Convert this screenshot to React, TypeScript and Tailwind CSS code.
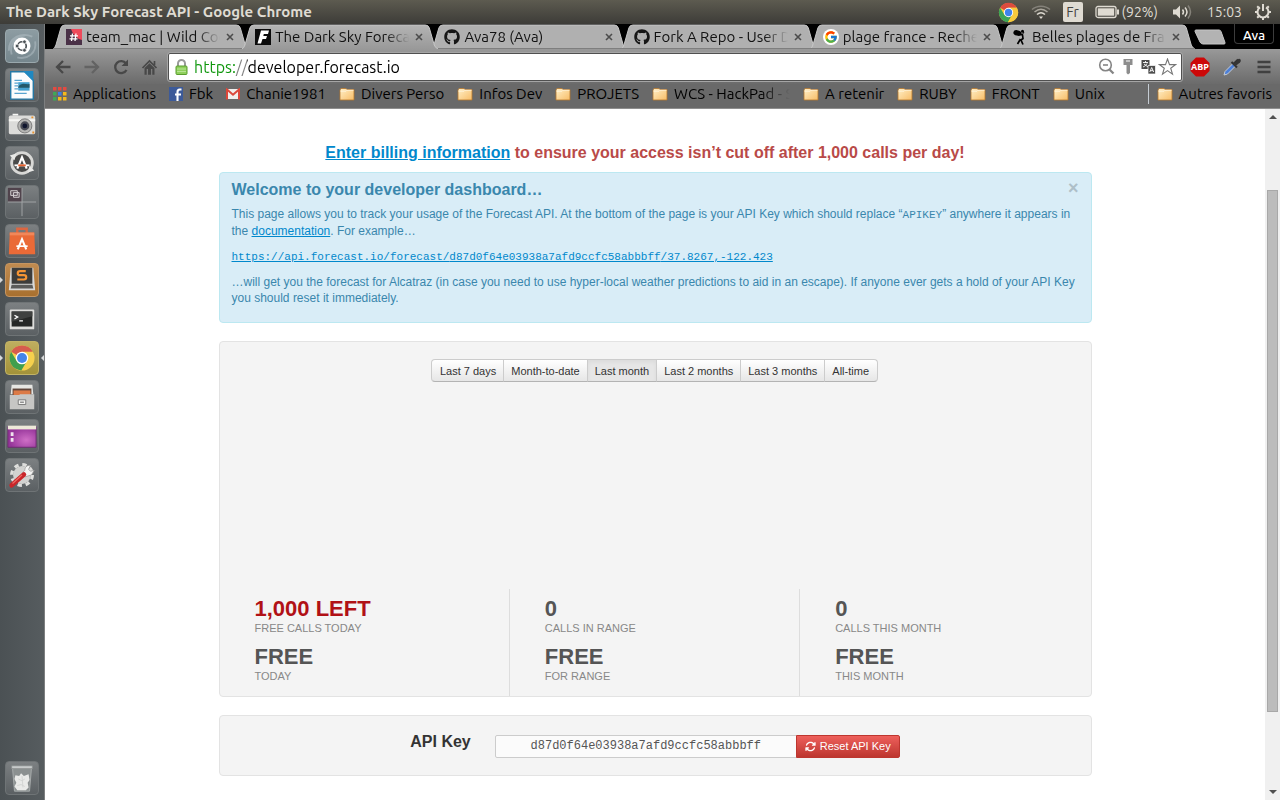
import type { ReactNode } from 'react';
import { FaGithub } from 'react-icons/fa';
import { FaArrowsRotate } from 'react-icons/fa6';
import { FcGoogle } from 'react-icons/fc';

const API_KEY = 'd87d0f64e03938a7afd9ccfc58abbbff';

/* ---------- shared drawings ---------- */

function ChromeLogo({ size }: { size: number }) {
  return (
    <svg width={size} height={size} viewBox="0 0 24 24" aria-hidden="true">
      <circle cx="12" cy="12" r="11" fill="#f6c93d" />
      <path d="M12 12 2.47 6.5A11 11 0 0 1 21.53 6.5H12Z" fill="#dd4b3e" />
      <path d="M2.47 6.5A11 11 0 0 0 11.4 23L16.3 14.6 7.6 15.2Z" fill="#3da557" />
      <path d="M21.53 6.5A11 11 0 0 1 11.4 23L16.5 14.4 12 6.5Z" fill="#f6c93d" />
      <circle cx="12" cy="12" r="5.3" fill="#fff" />
      <circle cx="12" cy="12" r="4.2" fill="#3f83ec" />
    </svg>
  );
}

function Folder() {
  return (
    <svg width="16" height="14" viewBox="0 0 16 14" aria-hidden="true" className="shrink-0">
      <defs>
        <linearGradient id="folder" x1="0" y1="0" x2="1" y2="1">
          <stop offset="0" stopColor="#fff0c9" />
          <stop offset="1" stopColor="#f8bd67" />
        </linearGradient>
      </defs>
      <path d="M1 3 2 1.500h5l1 1h7V13H1Z" fill="url(#folder)" stroke="#b5762c" strokeWidth="0.8" />
      <path d="M1.500 4.200h5.500l1-1h6.500" fill="none" stroke="#fff8e5" strokeWidth="0.8" />
    </svg>
  );
}

/* ---------- desktop top bar ---------- */

function MenuBar() {
  return (
    <header className="flex h-6 shrink-0 items-center justify-between bg-linear-to-b from-[#5d5b50] to-[#3d3c38] pr-2 pl-1.5 text-[#dfdbd2]">
      <h1 className="text-[15px] leading-6 font-bold">The Dark Sky Forecast API - Google Chrome</h1>
      <div className="flex items-center text-sm leading-6">
        <ChromeLogo size={21} />
        <svg width="20" height="16" viewBox="0 0 20 16" aria-hidden="true" className="ml-3" fill="none" strokeWidth="1.5">
          <path d="M1 5.500C6 1 14 1 19 5.500" stroke="#85827a" />
          <path d="M3.500 8C7.500 4.500 12.500 4.500 16.500 8" stroke="#aaa69d" />
          <path d="M6 10.500C8.500 8.300 11.500 8.300 14 10.500" stroke="#dfdbd2" />
          <path d="M8 12.500h4L10 15Z" fill="#dfdbd2" stroke="none" />
        </svg>
        <span className="ml-3 flex h-5 w-5 items-center justify-center rounded-xs bg-[#dfdbd2] text-sm text-[#45443f]">Fr</span>
        <svg width="25" height="14" viewBox="0 0 25 14" aria-hidden="true" className="ml-3">
          <rect x="1" y="1.500" width="20" height="11" rx="2" fill="none" stroke="#dfdbd2" strokeWidth="1.300" />
          <rect x="2.800" y="3.300" width="16.400" height="7.400" fill="#dfdbd2" />
          <path d="M22 4.500h2v5h-2z" fill="#dfdbd2" />
        </svg>
        <span className="ml-0.5">(92%)</span>
        <svg width="21" height="16" viewBox="0 0 21 16" aria-hidden="true" className="ml-3.5" fill="none" strokeWidth="1.500">
          <path d="M1 5.500h3l4-4v13l-4-4H1Z" fill="#dfdbd2" />
          <path d="M10.500 5.500q2 2.500 0 5M13 3.500q4 4.500 0 9" stroke="#dfdbd2" />
          <path d="M16 1.500q5 6.500 0 13" stroke="#85827a" />
        </svg>
        <time className="ml-3.5">15:03</time>
        <svg width="18" height="18" viewBox="0 0 18 18" aria-hidden="true" className="ml-3" fill="none" stroke="#dfdbd2">
          <path d="M6 4.300A5.500 5.500 0 1 0 12 4.300" strokeWidth="2" />
          <path d="M9 1v7" strokeWidth="2" />
          <path d="M1 9h2M15 9h2M9 15v2M3.200 3.200l1.500 1.500M14.800 3.200l-1.500 1.500M3.200 14.800l1.500-1.500M14.800 14.800l-1.500-1.500" strokeWidth="2" />
        </svg>
      </div>
    </header>
  );
}

/* ---------- launcher ---------- */

type LauncherItem = { name: string; tone: string; art: ReactNode; running?: boolean; focused?: boolean };

const GREY = 'border-[#6f7476] bg-linear-to-b from-[#7c8082] to-[#5b6063]';

const launcher: LauncherItem[] = [
  {
    name: 'Dash',
    tone: 'border-[#9aa8ad] bg-linear-to-b from-[#8d9ca2] to-[#75868d]',
    art: (
      <>
        <path d="M3 22C3 8 16 2 28 7M31 12c2 12-8 20-19 17M6 26C3 15 11 6 20 6" fill="none" stroke="#b5c2c7" strokeWidth="2" opacity=".5" />
        <circle cx="17" cy="17" r="9" fill="#fff" />
        <circle cx="17" cy="17" r="4.500" fill="none" stroke="#4a5054" strokeWidth="1.800" />
        <g fill="#4a5054" stroke="#fff" strokeWidth=".8">
          <circle cx="11.800" cy="17" r="2" />
          <circle cx="19.600" cy="12.500" r="2" />
          <circle cx="19.600" cy="21.500" r="2" />
        </g>
      </>
    ),
  },
  {
    name: 'LibreOffice Writer',
    tone: GREY,
    art: (
      <>
        <path d="M5 3h15l9 9v20H5Z" fill="#fafcfd" stroke="#2478a5" strokeWidth="1.500" />
        <path d="M18 2h11v11Z" fill="#1f88c1" />
        <path d="M9 12h8M9 15h4M9 18h4M9 21h4M9 26h13" stroke="#58a3cf" strokeWidth="1.300" />
        <path d="M13 14h12v9H13z" fill="#45a2d0" />
        <path d="M13 19c4-6 8-2 12-3v4H13Z" fill="#24596a" />
      </>
    ),
  },
  {
    name: 'Camera',
    tone: GREY,
    art: (
      <>
        <rect x="3" y="8" width="28" height="20" rx="2" fill="#dcdcda" />
        <path d="M7 6h6v2H7zM3 12h28v2H3z" fill="#f6f6f4" />
        <circle cx="20" cy="19" r="7.500" fill="#b5b5b3" stroke="#777" />
        <circle cx="20" cy="19" r="4.800" fill="#4a4c55" />
        <circle cx="20" cy="19" r="2.500" fill="#10152e" />
        <path d="M27 9h2v2h-2zM28 25h2v2h-2z" fill="#e8912d" />
      </>
    ),
  },
  {
    name: 'Software Updater',
    tone: GREY,
    art: (
      <>
        <circle cx="17" cy="17" r="11" fill="#4a4a49" stroke="#d8d8d6" strokeWidth="3" />
        <path d="M4 9l7-2-2 7ZM30 25l-7 2 2-7Z" fill="#e8e8e6" />
        <path d="M12 23l5-12 5 12" fill="none" stroke="#fff" strokeWidth="2.300" />
        <path d="M9 19.500h16" stroke="#fff" strokeWidth="2" />
        <path d="M13 19.500h8" stroke="#e6602d" strokeWidth="2" />
      </>
    ),
  },
  {
    name: 'Workspace Switcher',
    tone: GREY,
    art: (
      <>
        <path d="M2 2h15v15H2z" fill="#50434c" />
        <path d="M17 2v30M2 17h30" stroke="#a3a6a8" />
        <path d="M5 5h7v5H5zM8 7h6v5H8z" fill="#5f525b" stroke="#d5d0d3" />
      </>
    ),
  },
  {
    name: 'Software Centre',
    tone: GREY,
    art: (
      <>
        <path d="M12 9V4h10v5" fill="none" stroke="#dc6641" strokeWidth="2.500" />
        <path d="M4 8h26l1 23H3Z" fill="#ea6a37" />
        <path d="M4 8h26v3H4Z" fill="#f28759" />
        <path d="M12.500 26l4.500-11 4.500 11" fill="none" stroke="#fff" strokeWidth="2.200" />
        <path d="M11 22.500h12" stroke="#fff" strokeWidth="1.800" />
      </>
    ),
  },
  {
    name: 'Sublime Text',
    tone: 'border-[#c59561] bg-linear-to-b from-[#c08b50] to-[#a8702f]',
    running: true,
    art: (
      <>
        <path d="M5 4h24l2 24H3Z" fill="#d9d9d8" />
        <path d="M6 4h22v17H6z" fill="#3c3c3b" />
        <path d="M6 22h22l1 4H5Z" fill="#5b5b5a" />
        <path d="M21 7.500h-6q-2.500 0-2.500 2.200t2.500 2.200h4q2.500 0 2.500 2.300t-2.500 2.300h-7" fill="none" stroke="#f59434" strokeWidth="2.300" />
      </>
    ),
  },
  {
    name: 'Terminal',
    tone: GREY,
    art: (
      <>
        <rect x="4" y="7" width="26" height="21" rx="1" fill="#dddddb" />
        <path d="M6 9h22v16H6z" fill="#262827" />
        <path d="M6 9h22v5L6 20Z" fill="#3f4140" />
        <path d="M9 13l3.500 2-3.500 2M14 19h4" fill="none" stroke="#fff" strokeWidth="1.300" />
      </>
    ),
  },
  {
    name: 'Google Chrome',
    tone: 'border-[#c2b366] bg-linear-to-b from-[#bfae5f] to-[#a39239]',
    running: true,
    focused: true,
    art: (
      <g transform="translate(2.500 2.500) scale(1.210)">
        <circle cx="12" cy="12" r="11" fill="#f6d04d" />
        <path d="M12 12 2.470 6.500A11 11 0 0 1 21.530 6.500H12Z" fill="#d65c4e" />
        <path d="M2.470 6.500A11 11 0 0 0 11.400 23L16.300 14.600 7.600 15.200Z" fill="#409f4e" />
        <circle cx="12" cy="12" r="5.500" fill="#fff" />
        <circle cx="12" cy="12" r="4.400" fill="#4585ea" />
      </g>
    ),
  },
  {
    name: 'Files',
    tone: GREY,
    art: (
      <>
        <path d="M6 4h22l1 10H5Z" fill="#e6e6e3" />
        <path d="M7 8h20v8H7z" fill="#60453a" />
        <path d="M8 10h18v5H8z" fill="#dc7a46" />
        <path d="M4 15h10l1-1h15v16H4Z" fill="#c6c6c4" />
        <path d="M13 20h8v5h-8z" fill="#f2f2f0" stroke="#777" />
        <path d="M15 22.500h4" stroke="#555" />
      </>
    ),
  },
  {
    name: 'Desktop',
    tone: GREY,
    art: (
      <>
        <defs>
          <radialGradient id="wallpaper" cx=".65" cy=".65" r=".6">
            <stop offset="0" stopColor="#cf6fc6" />
            <stop offset="1" stopColor="#96359a" />
          </radialGradient>
        </defs>
        <path d="M2 7h30v22H2z" fill="url(#wallpaper)" stroke="#6b2b6e" />
        <path d="M2 6h30v4H2z" fill="#eee9d9" />
        <path d="M5 13h3v4H5zM5 19h3v4H5z" fill="#efe2ee" />
      </>
    ),
  },
  {
    name: 'System Settings',
    tone: GREY,
    art: (
      <>
        <circle cx="17" cy="17" r="11" fill="none" stroke="#dededc" strokeWidth="3.500" strokeDasharray="4.600 4.040" />
        <circle cx="17" cy="17" r="9.500" fill="#d2d2d0" />
        <path d="M20 12l-3 3 3 4 7-2 3-5-4 1-2-2 2-4c-4-1-6 2-6 5Z" fill="#f4f4f3" stroke="#9a9a98" strokeWidth=".8" />
        <path d="M6 28 19 16.500" stroke="#c9262a" strokeWidth="5" strokeLinecap="round" />
        <path d="M7 26 17 17" stroke="#ee6b65" strokeWidth="1.200" />
      </>
    ),
  },
];

function LauncherTile({ name, tone, art, running, focused }: LauncherItem) {
  return (
    <li className="relative">
      <button type="button" aria-label={name} className={`block h-[34px] w-[34px] rounded-sm border ${tone}`}>
        <svg viewBox="0 0 34 34" aria-hidden="true" className="h-full w-full">
          {art}
        </svg>
      </button>
      {running && <span className="absolute top-3.5 -left-[5px] border-y-3 border-l-3 border-y-transparent border-l-[#d8dadb]" />}
      {focused && <span className="absolute top-3.5 -right-[5px] border-y-3 border-r-3 border-y-transparent border-r-[#d8dadb]" />}
    </li>
  );
}

function Launcher() {
  return (
    <nav aria-label="Launcher" className="flex w-[45px] shrink-0 flex-col justify-between border-r border-[#7d7f80] bg-linear-to-r from-[#4b5154] to-[#565c5f] p-[5px]">
      <ul className="flex flex-col gap-[5px]">
        {launcher.map((item) => (
          <LauncherTile key={item.name} {...item} />
        ))}
      </ul>
      <ul>
        <LauncherTile
          name="Trash"
          tone={GREY}
          art={
            <>
              <path d="M7 7h20l-2 24H9Z" fill="#8b9090" stroke="#a9adad" />
              <path d="M10 14l4 1 2-3 3 3 5-2 1 6-2 3 1 5-3 3H12l-3-4 2-4-2-4Z" fill="#e9eae8" />
              <path d="M13 18l4 2 3-2M12 25l4-1 4 2M17 15l1 12" fill="none" stroke="#d2d4d2" />
              <path d="M6 4h22v3H6z" fill="#c7caca" stroke="#888c8c" strokeWidth=".8" />
            </>
          }
        />
      </ul>
    </nav>
  );
}

/* ---------- browser tabs ---------- */

const tabs: { title: string; icon: ReactNode; active?: boolean }[] = [
  {
    title: 'team_mac | Wild Code School',
    icon: (
      <svg width="16" height="16" viewBox="0 0 16 16" aria-hidden="true">
        <path d="M0 0h16v16H0z" fill="#4a3147" />
        <path d="M5 0h11v11Q8 9 5 0Z" fill="#ee4a5b" />
        <path d="M6.500 4.500 5.500 12M10 4.500 9 12M4 6.800h8M3.500 9.800h8" stroke="#fff" strokeWidth="1.300" />
      </svg>
    ),
  },
  {
    title: 'The Dark Sky Forecast API',
    active: true,
    icon: (
      <svg width="16" height="16" viewBox="0 0 16 16" aria-hidden="true">
        <path d="M0 0h16v16H0z" fill="#0c0c0c" />
        <path d="M6 1.500h8L13 5H8.800l-.500 2h3.700l-1 3H7.500L6 14.500H2.500Z" fill="#fff" />
      </svg>
    ),
  },
  { title: 'Ava78 (Ava)', icon: <FaGithub size={16} color="#161616" /> },
  { title: 'Fork A Repo - User Documentation', icon: <FaGithub size={16} color="#161616" /> },
  {
    title: 'plage france - Recherche Google',
    icon: (
      <span className="flex h-4 w-4 items-center justify-center rounded-full bg-white">
        <FcGoogle size={14} />
      </span>
    ),
  },
  {
    title: 'Belles plages de France',
    icon: (
      <svg width="16" height="16" viewBox="0 0 16 16" aria-hidden="true">
        <ellipse cx="5.500" cy="4" rx="4.200" ry="2.700" fill="#000" transform="rotate(15 5.500 4)" />
        <circle cx="10.500" cy="2.200" r="1.500" fill="#000" />
        <path d="M8.500 5.500l2 .500.500 3.500-2 1.500 2 4.500M8.500 10l-3 5" fill="none" stroke="#000" strokeWidth="1.700" />
        <path d="M10 6l2-3" stroke="#000" strokeWidth="1" />
      </svg>
    ),
  },
];

function TabStrip() {
  return (
    <div className="flex h-[25px] shrink-0 items-stretch bg-black pl-2">
      <div role="tablist" className="flex min-w-0 flex-1">
        {tabs.map(({ title, icon, active }) => (
          <div key={title} className={`relative flex min-w-0 flex-1 items-center pr-1 pl-[13px] ${active ? 'z-10' : ''}`}>
            <svg viewBox="0 0 200 25" preserveAspectRatio="none" aria-hidden="true" className="absolute inset-y-0 left-0 h-full w-[calc(100%+7px)]">
              <defs>
                <linearGradient id="tab-active" x1="0" y1="0" x2="0" y2="1">
                  <stop offset="0" stopColor="#b4b4b4" />
                  <stop offset="1" stopColor="#999999" />
                </linearGradient>
              </defs>
              <path d="M0 25Q2 24 3 21L8 4Q9 1 12 1H187Q190 1 191 4L196 21Q197 24 200 25Z" fill={active ? 'url(#tab-active)' : '#b0b0b0'} />
              <path d="M0 25Q2 24 3 21L8 4Q9 1 12 1H187Q190 1 191 4L196 21Q197 24 200 25" fill="none" stroke="#c6c6c6" strokeWidth="1" />
              {!active && <path d="M0 24.500H200" stroke="#7d7d7d" />}
            </svg>
            <button type="button" role="tab" aria-selected={!!active} className="relative flex min-w-0 flex-1 items-center gap-1 text-left text-[15px] leading-6 text-[#111]">
              <span className="shrink-0">{icon}</span>
              <span className="min-w-0 flex-1 overflow-hidden whitespace-nowrap [mask-image:linear-gradient(to_right,black_calc(100%-24px),transparent)]">{title}</span>
            </button>
            <button type="button" aria-label={`Close ${title}`} className="relative ml-0.5 flex h-4 w-4 shrink-0 items-center justify-center">
              <svg width="8" height="8" viewBox="0 0 8 8" aria-hidden="true">
                <path d="M1 1l6 6M7 1 1 7" stroke="#4c4c4c" strokeWidth="1.600" />
              </svg>
            </button>
          </div>
        ))}
      </div>
      <button type="button" aria-label="New tab" className="ml-1.5 self-center">
        <svg width="32" height="16" viewBox="0 0 32 16" aria-hidden="true">
          <path d="M2 1h23q1.500 0 2 1.500l4 11q.5 1.500-1 1.500H9q-2 0-3-2L1 2.500Q.6 1 2 1Z" fill="#b3b3b3" stroke="#c6c6c6" />
        </svg>
      </button>
      <button type="button" className="mr-1.5 ml-2 h-5 self-start rounded-b-sm border border-t-0 border-[#3c3c3c] bg-black px-2 text-[13px] leading-[22px] font-medium text-white">Ava</button>
    </div>
  );
}

/* ---------- browser toolbar ---------- */

function NavButton({ label, children }: { label: string; children: ReactNode }) {
  return (
    <button type="button" aria-label={label} className="flex h-7 w-[29px] items-center justify-center">
      <svg width="18" height="18" viewBox="0 0 18 18" aria-hidden="true" fill="none" stroke="#484848" strokeWidth="2.300">
        {children}
      </svg>
    </button>
  );
}

function Toolbar() {
  return (
    <div className="flex h-[35px] shrink-0 items-center bg-linear-to-b from-[#999] to-[#6b6b6b] pr-2 pl-[3px]">
      <NavButton label="Back">
        <path d="M16.500 9H3M9 3 3 9l6 6" />
      </NavButton>
      <NavButton label="Forward">
        <path d="M1.500 9H15M9 3l6 6-6 6" stroke="#636363" />
      </NavButton>
      <NavButton label="Reload">
        <path d="M14.500 12A6 6 0 1 1 14 5.500" />
        <path d="M16 1.500V8H9.500Z" fill="#484848" stroke="none" />
      </NavButton>
      <NavButton label="Home">
        <path d="M1.500 10 8.500 3l7 7M13.500 3v4" strokeWidth="1.700" />
        <path d="M3.500 10 8.500 5.200l5 4.800v6.800h-2.200V11H10v5.800H7V11H5.700v5.800H3.500Z" fill="#484848" stroke="none" />
      </NavButton>
      <form className="ml-1 flex h-7 min-w-0 flex-1 items-center rounded-xs border border-[#505050] bg-white px-1.5 outline outline-[#a5a5a5]">
        <svg width="13" height="16" viewBox="0 0 13 16" aria-hidden="true" className="shrink-0">
          <path d="M3 8V4.500a3.500 3.500 0 0 1 7 0V8" fill="none" stroke="#9a9a9a" strokeWidth="2" />
          <rect x="1" y="7" width="11" height="8.500" rx="1" fill="#8fd05c" stroke="#5a9c2e" />
          <path d="M2 10h9M2 12.500h9" stroke="#b7e494" />
        </svg>
        <input
          aria-label="Address"
          type="text"
          defaultValue="https://developer.forecast.io"
          className="ml-1.5 min-w-0 flex-1 bg-[linear-gradient(to_right,#0d960b_41px,#808080_41px,#808080_53px,#000_53px)] bg-clip-text text-base leading-6 text-transparent caret-black outline-none"
        />
        <div className="flex items-center gap-1.5">
          <svg width="17" height="17" viewBox="0 0 17 17" aria-hidden="true" fill="none" stroke="#858585" strokeWidth="1.600">
            <circle cx="7.500" cy="7" r="5.800" />
            <path d="M5 7h5" />
            <path d="m11.500 11.500 4 4" strokeWidth="2.300" />
          </svg>
          <svg width="14" height="17" viewBox="0 0 14 17" aria-hidden="true">
            <path d="M2.500 1h9v6H9v8l-2 1.500L5.500 15V7h-3Z" fill="#8d8d8d" />
            <path d="M5 3h4" stroke="#fff" />
          </svg>
          <svg width="15" height="16" viewBox="0 0 15 16" aria-hidden="true">
            <path d="M.5 1h8v9h-8z" fill="#4d4d4d" />
            <path d="M2 3.500h5M4.500 2v1.500M6 4.500Q5 7 2 8M3 5l4 3" stroke="#fff" fill="none" strokeWidth=".9" />
            <path d="M7 6.500h7.500V15H7z" fill="#4d4d4d" stroke="#fff" strokeWidth=".7" />
            <path d="M8.800 13 10.700 8.500l2 4.500M9.500 11.700h2.500" stroke="#fff" fill="none" strokeWidth=".9" />
          </svg>
          <svg width="19" height="18" viewBox="0 0 19 18" aria-hidden="true" className="-mr-0.5 -ml-1">
            <path d="m9.500 1 2 5.600h6l-4.800 3.600 1.800 6-5-3.600-5 3.600 1.800-6L1.500 6.600h6Z" fill="#fff" stroke="#757575" strokeWidth="1.100" />
          </svg>
        </div>
      </form>
      <div className="ml-2 flex items-center">
        <button type="button" aria-label="Adblock Plus" className="relative flex h-5 w-5 items-center justify-center">
          <svg width="20" height="20" viewBox="0 0 20 20" aria-hidden="true" className="absolute">
            <path d="M6 .5h8L19.500 6v8L14 19.500H6L.5 14V6Z" fill="#cc0808" />
          </svg>
          <span className="relative font-['Open_Sans',sans-serif] text-[9px] leading-none font-bold text-white">ABP</span>
        </button>
        <svg width="20" height="20" viewBox="0 0 20 20" aria-hidden="true" className="ml-3">
          <path d="m2 18 1-3.500L11 6.500l2.500 2.500-8 8Z" fill="#4b7fd8" stroke="#c5cbd5" />
          <path d="m9.500 5 5.500 5.500M11.500 7 16 2.500" stroke="#333" strokeWidth="2" />
          <path d="m12 7 3.500-4.500q2-1.500 3 0t-.5 3L13.500 9Z" fill="#353535" />
        </svg>
        <button type="button" aria-label="Menu" className="ml-3.5">
          <svg width="16" height="16" viewBox="0 0 16 16" aria-hidden="true">
            <path d="M1.500 3h13M1.500 8h13M1.500 13h13" stroke="#404040" strokeWidth="2.600" />
          </svg>
        </button>
      </div>
    </div>
  );
}

/* ---------- bookmarks ---------- */

const APPS = ['#e44a41', '#e44a41', '#e44a41', '#3fa757', '#3e7fe4', '#f4b91c', '#3fa757', '#f4b91c', '#f4b91c'];

const appsIcon = (
  <svg width="14" height="14" viewBox="0 0 14 14" aria-hidden="true" className="shrink-0">
    {APPS.map((fill, i) => (
      <rect key={i} x={(i % 3) * 5} y={Math.floor(i / 3) * 5} width="3.500" height="3.500" fill={fill} />
    ))}
  </svg>
);

const facebookIcon = (
  <svg width="14" height="14" viewBox="0 0 14 14" aria-hidden="true" className="shrink-0">
    <path d="M0 0h14v14H0z" fill="#3c5a99" />
    <path d="M12.500 2.500h-1.700Q8.500 2.700 8.500 5v9M6 7.500h6" fill="none" stroke="#fff" strokeWidth="2.100" />
  </svg>
);

const gmailIcon = (
  <svg width="14" height="12" viewBox="0 0 14 12" aria-hidden="true" className="shrink-0">
    <path d="M0 1h14v10H0z" fill="#f1eeec" />
    <path d="M1 11.500V1.500l6 5.200 6-5.200v10" fill="none" stroke="#dc473a" strokeWidth="2" />
  </svg>
);

const bookmarks: { label: string; icon?: ReactNode; clipped?: boolean }[] = [
  { label: 'Applications', icon: appsIcon },
  { label: 'Fbk', icon: facebookIcon },
  { label: 'Chanie1981', icon: gmailIcon },
  { label: 'Divers Perso' },
  { label: 'Infos Dev' },
  { label: 'PROJETS' },
  { label: 'WCS - HackPad - Suivi', clipped: true },
  { label: 'A retenir' },
  { label: 'RUBY' },
  { label: 'FRONT' },
  { label: 'Unix' },
];

function BookmarkBar() {
  return (
    <nav aria-label="Bookmarks" className="flex h-[25px] shrink-0 items-center border-b border-[#8f8f8f] bg-[#696969] px-2 pb-1 text-[15px] leading-5 text-black">
      <ul className="flex min-w-0 flex-1 items-center gap-[13px] whitespace-nowrap">
        {bookmarks.map(({ label, icon, clipped }) => (
          <li key={label}>
            <a href="#bookmark" className="flex items-center gap-1.5">
              {icon ?? <Folder />}
              <span className={clipped ? 'w-[116px] overflow-hidden [mask-image:linear-gradient(to_right,black_75%,transparent)]' : ''}>{label}</span>
            </a>
          </li>
        ))}
      </ul>
      <a href="#bookmark" className="flex items-center gap-1.5 border-l border-[#c5ccd3] pl-2">
        <Folder />
        <span>Autres favoris</span>
      </a>
    </nav>
  );
}

/* ---------- dashboard page ---------- */

const ranges = ['Last 7 days', 'Month-to-date', 'Last month', 'Last 2 months', 'Last 3 months', 'All-time'];

const stats = [
  { calls: '1,000 LEFT', callsLabel: 'FREE CALLS TODAY', cost: 'FREE', costLabel: 'TODAY', tone: 'text-[#b11116]' },
  { calls: '0', callsLabel: 'CALLS IN RANGE', cost: 'FREE', costLabel: 'FOR RANGE', tone: 'text-[#555]' },
  { calls: '0', callsLabel: 'CALLS THIS MONTH', cost: 'FREE', costLabel: 'THIS MONTH', tone: 'text-[#555]' },
];

function Dashboard() {
  return (
    <main className="min-w-0 flex-1 overflow-hidden bg-white px-4 pt-8 font-['Liberation_Sans',Arial,sans-serif] text-[#333]">
      <div className="mx-auto max-w-[873px]">
        <p className="pr-5 text-center text-base leading-6 font-bold text-[#b94a48]">
          <a href="#billing" className="text-[#0088cc] underline">Enter billing information</a> to ensure your access isn’t cut off after 1,000 calls per day!
        </p>

        <section className="relative mt-[7px] rounded-sm border border-[#bce8f1] bg-[#d9edf7] px-3 pt-[7px] pb-4 text-xs leading-4 text-[#3a87ad]">
          <button type="button" aria-label="Dismiss" className="absolute top-1.5 right-3 text-lg leading-[18px] font-bold text-[#aebfc8]">×</button>
          <h2 className="text-base leading-5 font-bold">Welcome to your developer dashboard…</h2>
          <p className="mt-1.5">
            This page allows you to track your usage of the Forecast API. At the bottom of the page is your API Key which should replace “
            <code className="font-['Liberation_Mono',monospace] text-[11px]">APIKEY</code>” anywhere it appears in the{' '}
            <a href="#docs" className="text-[#0088cc] underline">documentation</a>. For example…
          </p>
          <p className="mt-[9px]">
            <a href="#example" className="font-['Liberation_Mono',monospace] text-[11px] text-[#0088cc] underline">
              https://api.forecast.io/forecast/{API_KEY}/37.8267,-122.423
            </a>
          </p>
          <p className="mt-[9px]">
            …will get you the forecast for Alcatraz (in case you need to use hyper-local weather predictions to aid in an escape). If anyone ever gets a hold of your API Key you should reset it immediately.
          </p>
        </section>

        <section className="mt-[18px] rounded-sm border border-[#e3e3e3] bg-[#f4f4f4] pt-[17px]">
          <div role="group" aria-label="Range" className="flex justify-center text-[11px]">
            {ranges.map((range) => (
              <button
                key={range}
                type="button"
                aria-pressed={range === 'Last month'}
                className={`-ml-px border border-[#ccc] border-b-[#b3b3b3] px-[7px] pt-px leading-5 first:rounded-l-sm first:pl-2 last:rounded-r-sm last:pr-2 ${
                  range === 'Last month' ? 'bg-[#e6e6e6] inset-shadow-sm' : 'bg-linear-to-b from-white to-[#e6e6e6]'
                }`}
              >
                {range}
              </button>
            ))}
          </div>
          <div className="h-[207px]" />
          <div className="grid grid-cols-3">
            {stats.map(({ calls, callsLabel, cost, costLabel, tone }) => (
              <dl key={callsLabel} className="flex flex-col border-r border-[#ddd] pt-1.5 pr-4 pb-3.5 pl-[35px] text-[11px] leading-3 text-[#888] last:border-r-0">
                <dd className={`text-[22px] leading-[27px] font-bold ${tone}`}>{calls}</dd>
                <dt>{callsLabel}</dt>
                <dd className="mt-[9px] text-[22px] leading-[27px] font-bold text-[#555]">{cost}</dd>
                <dt>{costLabel}</dt>
              </dl>
            ))}
          </div>
        </section>

        <section className="mt-[18px] flex items-center justify-center rounded-sm border border-[#e3e3e3] bg-[#f4f4f4] pt-[19px] pb-[17px]">
          <label htmlFor="api-key" className="mr-6 pb-2.5 text-base leading-[13px] font-bold">API Key</label>
          <input
            id="api-key"
            readOnly
            value={API_KEY}
            className="h-[23px] w-[302px] rounded-l-xs border border-[#ccc] bg-[#fbfbfb] pb-0.5 text-center font-['Liberation_Mono',monospace] text-xs text-[#555] outline-none"
          />
          <button type="button" className="-ml-px flex h-[23px] items-center gap-1 rounded-r-xs border border-[#bd362f] bg-linear-to-b from-[#ee5f5b] to-[#bd362f] px-2 text-[11px] text-white">
            <FaArrowsRotate size={11} />
            Reset API Key
          </button>
        </section>
      </div>
    </main>
  );
}

function ScrollRail() {
  return (
    <div aria-hidden="true" className="flex w-[15px] shrink-0 flex-col items-center bg-[#f0f0f0] py-1">
      <span className="mt-0.5 border-x-4 border-b-4 border-x-transparent border-b-[#505050]" />
      <span className="mt-[71px] w-[11px] flex-1 border border-[#a8a8a8] bg-[#bcbcbc]" />
      <span className="mt-[78px] mb-0.5 border-x-4 border-t-4 border-x-transparent border-t-[#505050]" />
    </div>
  );
}

export default function App() {
  return (
    <div className="flex h-screen flex-col overflow-hidden font-[Ubuntu,'Noto_Sans',sans-serif]">
      <MenuBar />
      <div className="flex min-h-0 flex-1">
        <Launcher />
        <div className="flex min-w-0 flex-1 flex-col">
          <TabStrip />
          <Toolbar />
          <BookmarkBar />
          <div className="flex min-h-0 flex-1">
            <Dashboard />
            <ScrollRail />
          </div>
        </div>
      </div>
    </div>
  );
}
